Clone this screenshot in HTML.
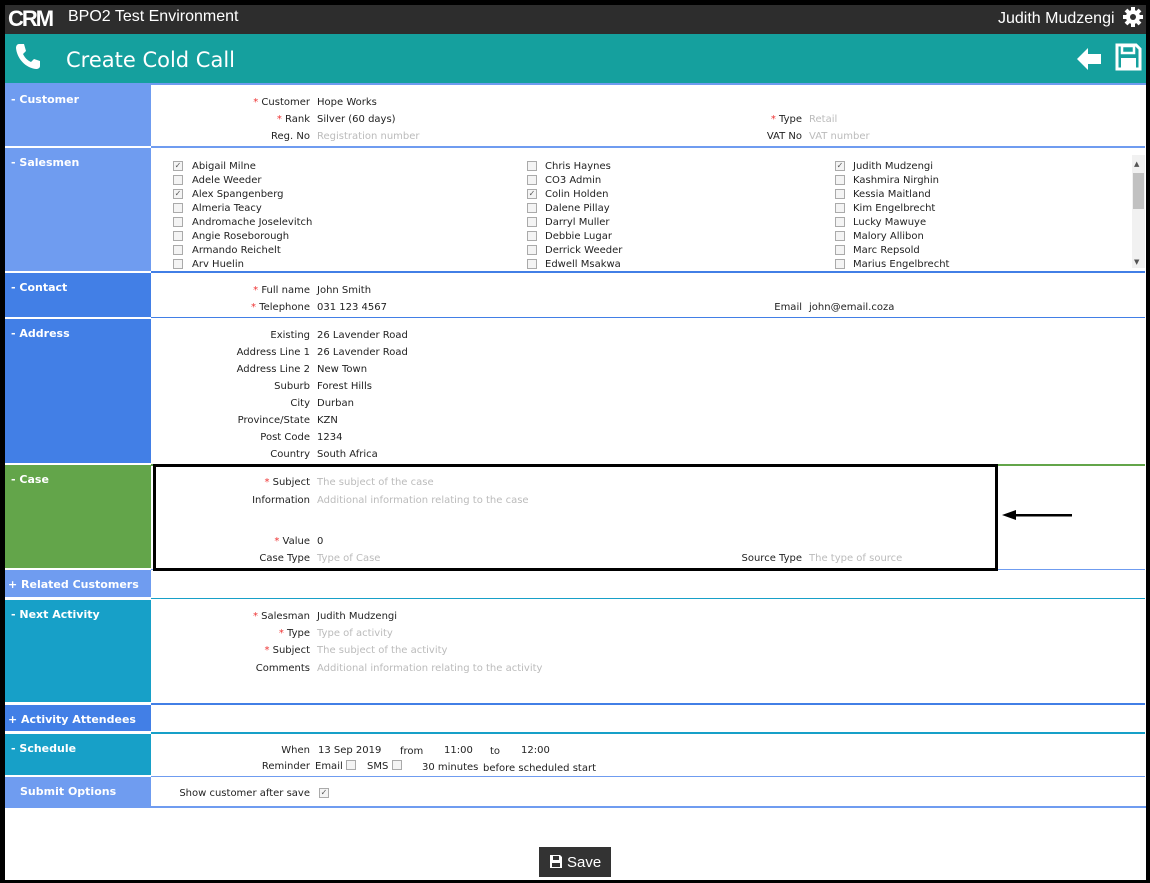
<!DOCTYPE html>
<html><head><meta charset="utf-8"><style>
*{margin:0;padding:0;box-sizing:border-box}
body{width:1150px;height:883px;position:relative;overflow:hidden;background:#000;font-family:"DejaVu Sans","Liberation Sans",sans-serif;font-size:10px;color:#222}
#pg{position:absolute;left:5px;top:5px;width:1141px;height:875px;background:#fff}
.a{position:absolute;white-space:nowrap;line-height:14px;margin-top:2px}
.L{text-align:right;width:200px}
.r{color:#e33}
.ph{color:#bbb}
.sb{position:absolute;left:5px;width:146px;color:#fff;font-weight:bold;font-size:11px;padding:8px 0 0 6px;line-height:14px}
.ln{position:absolute;left:151px;width:994px;height:2px}
.cb{position:absolute;width:10px;height:10px;border:1px solid #aaa;background:#f4f4f4;font-size:8px;line-height:8px;text-align:center;color:#555;margin-top:2px}
</style></head><body>
<div id="pg"></div>
<!-- header -->
<div style="position:absolute;left:5px;top:5px;width:1141px;height:29px;background:#2d2d2d"></div>
<div class="a" style="left:8px;top:5px;color:#fff;font:bold 22px/24px 'Liberation Sans',sans-serif;letter-spacing:-2px">CRM</div>
<div class="a" style="left:68px;top:6px;color:#fff;font:16px/18px 'Liberation Sans',sans-serif">BPO2 Test Environment</div>
<div class="a" style="left:998px;top:8px;color:#fff;font:16px/18px 'Liberation Sans',sans-serif">Judith Mudzengi</div>
<svg style="position:absolute;left:1122px;top:6px" width="22" height="22" viewBox="0 0 22 22"><g fill="#fff"><circle cx="11" cy="11" r="7"/><g stroke="#fff" stroke-width="4"><line x1="11" y1="1" x2="11" y2="21"/><line x1="1" y1="11" x2="21" y2="11"/><line x1="4" y1="4" x2="18" y2="18"/><line x1="18" y1="4" x2="4" y2="18"/></g></g><circle cx="11" cy="11" r="3" fill="#2d2d2d"/></svg>
<div style="position:absolute;left:5px;top:34px;width:1141px;height:49px;background:#15a09e"></div>
<svg style="position:absolute;left:14px;top:42px" width="28" height="28" viewBox="0 0 28 28"><path d="M5 2 L10 2 L12 9 L9 12 C11 16 13 18 17 20 L20 17 L26 19 L26 24 C26 26 24 27 22 27 C12 26 3 17 2 6 C2 4 3 2 5 2Z" fill="#fff"/></svg>
<div class="a" style="left:66px;top:45px;color:#fff;font:21px/26px 'DejaVu Sans',sans-serif">Create Cold Call</div>
<svg style="position:absolute;left:1075px;top:46px" width="28" height="26" viewBox="0 0 28 26"><path d="M2 13 L13 2 L13 8 L26 8 L26 18 L13 18 L13 24 Z" fill="#fff"/></svg>
<svg style="position:absolute;left:1114px;top:43px" width="28" height="28" viewBox="0 0 28 28"><path d="M3 2 H22 L26 6 V26 H3Z" fill="none" stroke="#fff" stroke-width="3"/><rect x="8" y="3" width="12" height="7" fill="none" stroke="#fff" stroke-width="2.5"/><rect x="7" y="15" width="15" height="10" fill="#fff"/></svg>
<div style="position:absolute;left:5px;top:83px;width:1141px;height:2px;background:#6f9cf0"></div>

<!-- sidebar sections -->
<div class="sb" style="top:85px;height:61px;background:#6f9cf0">- Customer</div>
<div class="sb" style="top:148px;height:123px;background:#6f9cf0">- Salesmen</div>
<div class="ln" style="top:146px;background:#6f9cf0"></div>
<div class="sb" style="top:273px;height:44px;background:#427fe6">- Contact</div>
<div class="ln" style="top:271px;background:#427fe6"></div>
<div class="sb" style="top:319px;height:144px;background:#427fe6">- Address</div>
<div class="ln" style="top:317px;height:1px;background:#427fe6"></div>
<div class="sb" style="top:465px;height:103px;background:#63a54a">- Case</div>
<div class="ln" style="top:464px;background:#63a54a"></div>
<div class="sb" style="top:570px;height:27px;background:#6f9cf0;padding-left:3px">+ Related Customers</div>
<div class="ln" style="top:569px;height:1px;background:#6f9cf0"></div>
<div class="sb" style="top:600px;height:102px;background:#17a0c8">- Next Activity</div>
<div class="ln" style="top:598px;height:1px;background:#17a0c8"></div>
<div class="sb" style="top:705px;height:26px;background:#427fe6;padding-left:3px">+ Activity Attendees</div>
<div class="ln" style="top:703px;background:#427fe6"></div>
<div class="sb" style="top:734px;height:41px;background:#17a0c8">- Schedule</div>
<div class="ln" style="top:732px;background:#17a0c8"></div>
<div class="sb" style="top:777px;height:29px;background:#6f9cf0;padding-left:15px">Submit Options</div>
<div class="ln" style="top:776px;height:1px;background:#6f9cf0"></div>
<div style="position:absolute;left:5px;top:806px;width:1141px;height:2px;background:#6f9cf0"></div>

<!-- customer -->
<div class="a L" style="left:110px;top:94px"><span class="r">*</span> Customer</div><div class="a" style="left:317px;top:94px">Hope Works</div>
<div class="a L" style="left:110px;top:111px"><span class="r">*</span> Rank</div><div class="a" style="left:317px;top:111px">Silver (60 days)</div>
<div class="a L" style="left:110px;top:128px">Reg. No</div><div class="a ph" style="left:317px;top:128px">Registration number</div>
<div class="a L" style="left:602px;top:111px"><span class="r">*</span> Type</div><div class="a ph" style="left:809px;top:111px">Retail</div>
<div class="a L" style="left:602px;top:128px">VAT No</div><div class="a ph" style="left:809px;top:128px">VAT number</div>

<!-- salesmen -->
<div class="cb" style="left:173px;top:159px">✓</div><div class="a" style="left:192px;top:158px">Abigail Milne</div>
<div class="cb" style="left:173px;top:173px"></div><div class="a" style="left:192px;top:172px">Adele Weeder</div>
<div class="cb" style="left:173px;top:187px">✓</div><div class="a" style="left:192px;top:186px">Alex Spangenberg</div>
<div class="cb" style="left:173px;top:201px"></div><div class="a" style="left:192px;top:200px">Almeria Teacy</div>
<div class="cb" style="left:173px;top:215px"></div><div class="a" style="left:192px;top:214px">Andromache Joselevitch</div>
<div class="cb" style="left:173px;top:229px"></div><div class="a" style="left:192px;top:228px">Angie Roseborough</div>
<div class="cb" style="left:173px;top:243px"></div><div class="a" style="left:192px;top:242px">Armando Reichelt</div>
<div class="cb" style="left:173px;top:257px"></div><div class="a" style="left:192px;top:256px">Arv Huelin</div>

<div class="cb" style="left:527px;top:159px"></div><div class="a" style="left:545px;top:158px">Chris Haynes</div>
<div class="cb" style="left:527px;top:173px"></div><div class="a" style="left:545px;top:172px">CO3 Admin</div>
<div class="cb" style="left:527px;top:187px">✓</div><div class="a" style="left:545px;top:186px">Colin Holden</div>
<div class="cb" style="left:527px;top:201px"></div><div class="a" style="left:545px;top:200px">Dalene Pillay</div>
<div class="cb" style="left:527px;top:215px"></div><div class="a" style="left:545px;top:214px">Darryl Muller</div>
<div class="cb" style="left:527px;top:229px"></div><div class="a" style="left:545px;top:228px">Debbie Lugar</div>
<div class="cb" style="left:527px;top:243px"></div><div class="a" style="left:545px;top:242px">Derrick Weeder</div>
<div class="cb" style="left:527px;top:257px"></div><div class="a" style="left:545px;top:256px">Edwell Msakwa</div>

<div class="cb" style="left:835px;top:159px">✓</div><div class="a" style="left:853px;top:158px">Judith Mudzengi</div>
<div class="cb" style="left:835px;top:173px"></div><div class="a" style="left:853px;top:172px">Kashmira Nirghin</div>
<div class="cb" style="left:835px;top:187px"></div><div class="a" style="left:853px;top:186px">Kessia Maitland</div>
<div class="cb" style="left:835px;top:201px"></div><div class="a" style="left:853px;top:200px">Kim Engelbrecht</div>
<div class="cb" style="left:835px;top:215px"></div><div class="a" style="left:853px;top:214px">Lucky Mawuye</div>
<div class="cb" style="left:835px;top:229px"></div><div class="a" style="left:853px;top:228px">Malory Allibon</div>
<div class="cb" style="left:835px;top:243px"></div><div class="a" style="left:853px;top:242px">Marc Repsold</div>
<div class="cb" style="left:835px;top:257px"></div><div class="a" style="left:853px;top:256px">Marius Engelbrecht</div>
<div style="position:absolute;left:1132px;top:155px;width:13px;height:113px;background:#f1f1f1"></div>
<div style="position:absolute;left:1133px;top:173px;width:11px;height:36px;background:#c1c1c1"></div>
<div class="a" style="left:1134px;top:155px;font-size:7px;color:#555">▲</div>
<div class="a" style="left:1134px;top:253px;font-size:7px;color:#555">▼</div>

<!-- contact -->
<div class="a L" style="left:110px;top:282px"><span class="r">*</span> Full name</div><div class="a" style="left:317px;top:282px">John Smith</div>
<div class="a L" style="left:110px;top:299px"><span class="r">*</span> Telephone</div><div class="a" style="left:317px;top:299px">031 123 4567</div>
<div class="a L" style="left:602px;top:299px">Email</div><div class="a" style="left:809px;top:299px">john@email.coza</div>

<!-- address -->
<div class="a L" style="left:110px;top:327px">Existing</div><div class="a" style="left:317px;top:327px">26 Lavender Road</div>
<div class="a L" style="left:110px;top:344px">Address Line 1</div><div class="a" style="left:317px;top:344px">26 Lavender Road</div>
<div class="a L" style="left:110px;top:361px">Address Line 2</div><div class="a" style="left:317px;top:361px">New Town</div>
<div class="a L" style="left:110px;top:378px">Suburb</div><div class="a" style="left:317px;top:378px">Forest Hills</div>
<div class="a L" style="left:110px;top:395px">City</div><div class="a" style="left:317px;top:395px">Durban</div>
<div class="a L" style="left:110px;top:412px">Province/State</div><div class="a" style="left:317px;top:412px">KZN</div>
<div class="a L" style="left:110px;top:429px">Post Code</div><div class="a" style="left:317px;top:429px">1234</div>
<div class="a L" style="left:110px;top:446px">Country</div><div class="a" style="left:317px;top:446px">South Africa</div>

<!-- case -->
<div style="position:absolute;left:153px;top:464px;width:845px;height:107px;border:3px solid #000"></div>
<div class="a L" style="left:110px;top:474px"><span class="r">*</span> Subject</div><div class="a ph" style="left:317px;top:474px">The subject of the case</div>
<div class="a L" style="left:110px;top:492px">Information</div><div class="a ph" style="left:317px;top:492px">Additional information relating to the case</div>
<div class="a L" style="left:110px;top:533px"><span class="r">*</span> Value</div><div class="a" style="left:317px;top:533px">0</div>
<div class="a L" style="left:110px;top:550px">Case Type</div><div class="a ph" style="left:317px;top:550px">Type of Case</div>
<div class="a L" style="left:602px;top:550px">Source Type</div><div class="a ph" style="left:809px;top:550px">The type of source</div>
<svg style="position:absolute;left:1002px;top:509px" width="72" height="12" viewBox="0 0 72 12"><path d="M0 6 L14 1 L14 5 L70 5 L70 7.5 L14 7.5 L14 11Z" fill="#000"/></svg>

<!-- next activity -->
<div class="a L" style="left:110px;top:608px"><span class="r">*</span> Salesman</div><div class="a" style="left:317px;top:608px">Judith Mudzengi</div>
<div class="a L" style="left:110px;top:625px"><span class="r">*</span> Type</div><div class="a ph" style="left:317px;top:625px">Type of activity</div>
<div class="a L" style="left:110px;top:642px"><span class="r">*</span> Subject</div><div class="a ph" style="left:317px;top:642px">The subject of the activity</div>
<div class="a L" style="left:110px;top:660px">Comments</div><div class="a ph" style="left:317px;top:660px">Additional information relating to the activity</div>

<!-- schedule -->
<div class="a L" style="left:110px;top:742px">When</div><div class="a" style="left:318px;top:742px">13 Sep 2019</div>
<div class="a" style="left:400px;top:743px">from</div><div class="a" style="left:444px;top:742px">11:00</div>
<div class="a" style="left:490px;top:743px">to</div><div class="a" style="left:521px;top:742px">12:00</div>
<div class="a L" style="left:110px;top:758px">Reminder</div><div class="a" style="left:315px;top:758px">Email</div>
<div class="cb" style="left:346px;top:758px"></div>
<div class="a" style="left:367px;top:758px">SMS</div><div class="cb" style="left:392px;top:758px"></div>
<div class="a" style="left:422px;top:759px">30 minutes</div><div class="a" style="left:483px;top:760px">before scheduled start</div>

<div class="a L" style="left:110px;top:785px">Show customer after save</div>
<div class="cb" style="left:319px;top:786px">✓</div>

<!-- save -->
<div style="position:absolute;left:539px;top:847px;width:72px;height:30px;background:#333"></div>
<svg style="position:absolute;left:549px;top:854px" width="14" height="15" viewBox="0 0 14 15"><path d="M1 1 H11 L13 3 V14 H1Z" fill="#fff"/><rect x="4" y="2" width="6" height="4" fill="#333"/><rect x="3" y="9" width="8" height="4" fill="#333"/></svg>
<div class="a" style="left:567px;top:852px;color:#fff;font:15px/18px 'Liberation Sans',sans-serif">Save</div>
</body></html>
